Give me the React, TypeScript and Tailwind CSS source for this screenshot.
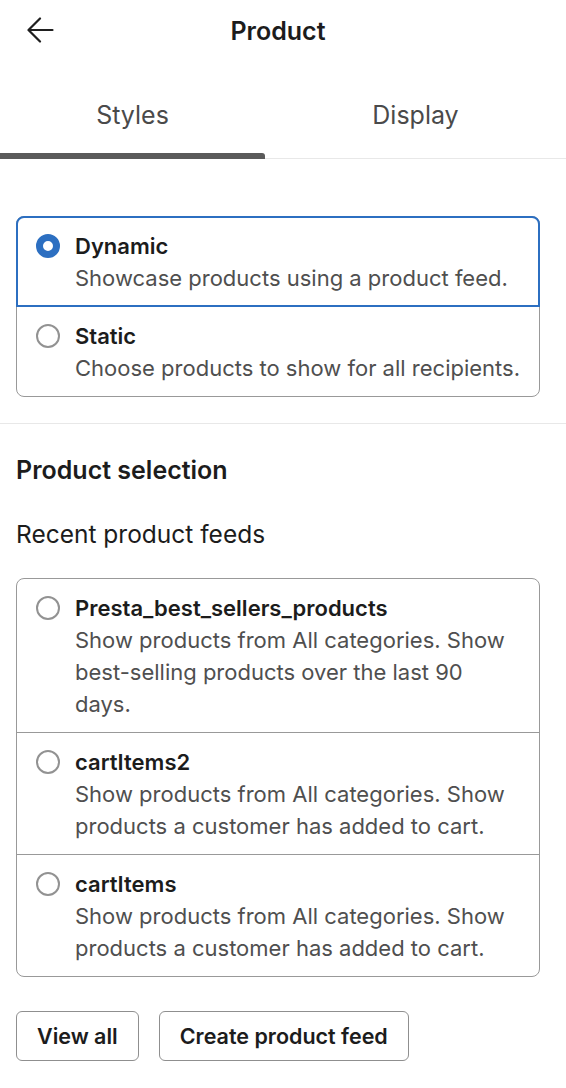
import { useState } from "react";

type Option = { id: string; title: string; desc: string };

const styleOptions: Option[] = [
  { id: "dynamic", title: "Dynamic", desc: "Showcase products using a product feed." },
  { id: "static", title: "Static", desc: "Choose products to show for all recipients." },
];

const feeds: Option[] = [
  {
    id: "presta",
    title: "Presta_best_sellers_products",
    desc: "Show products from All categories. Show best-selling products over the last 90 days.",
  },
  {
    id: "cart2",
    title: "cartItems2",
    desc: "Show products from All categories. Show products a customer has added to cart.",
  },
  {
    id: "cart",
    title: "cartItems",
    desc: "Show products from All categories. Show products a customer has added to cart.",
  },
];

function Radio({ checked }: { checked: boolean }) {
  return checked ? (
    <span className="mt-1 block size-6 shrink-0 rounded-full border-[7px] border-[#2c6fc1] bg-white" />
  ) : (
    <span className="mt-1 block size-6 shrink-0 rounded-full border-[2.5px] border-[#929292] bg-white" />
  );
}

// One bordered card holding a stack of radio rows; the picked row gets a
// blue outline drawn over the card's gray edge.
function RadioCard({
  options,
  value,
  onChange,
}: {
  options: Option[];
  value: string | null;
  onChange: (id: string) => void;
}) {
  return (
    <div className="rounded-lg border border-[#999999]">
      {options.map((o, i) => {
        const checked = o.id === value;
        const first = i === 0;
        const last = i === options.length - 1;
        return (
          <button
            key={o.id}
            type="button"
            onClick={() => onChange(o.id)}
            className={`relative flex w-full gap-[15px] pt-[13px] pr-4 pb-3 pl-[19px] text-left ${
              last ? "" : "border-b border-[#999999]"
            }`}
          >
            {checked && (
              <span
                className={`pointer-events-none absolute -inset-x-px -top-px -bottom-px border-2 border-[#2c6fc1] ${
                  first ? "rounded-t-lg" : ""
                } ${last ? "rounded-b-lg" : ""}`}
              />
            )}
            <Radio checked={checked} />
            <span className="min-w-0">
              <span className="block text-[22px] leading-8 font-semibold text-[#1c1c1c]">
                {o.title}
              </span>
              <span className="block text-[22px] leading-8 text-[#4f4f4f]">{o.desc}</span>
            </span>
          </button>
        );
      })}
    </div>
  );
}

export default function App() {
  const [tab, setTab] = useState<"styles" | "display">("styles");
  const [mode, setMode] = useState("dynamic");
  const [feed, setFeed] = useState<string | null>(null);

  return (
    <div className="min-h-screen bg-white font-['Inter','Liberation_Sans',sans-serif] text-[#1c1c1c]">
      <header className="relative flex h-[62px] items-center justify-center pt-[2px] pr-[10px]">
        <button type="button" aria-label="Back" className="absolute left-[27px] top-[17px]">
          <svg width="27" height="26" viewBox="0 0 27 26" fill="none" stroke="#1f1f1f" strokeWidth="2.2" strokeLinecap="round" strokeLinejoin="round">
            <path d="M25.5 13H2" />
            <path d="M13 1.5 1.5 13 13 24.5" />
          </svg>
        </button>
        <h1 className="text-[25px] font-semibold text-[#1c1c1c]">Product</h1>
      </header>

      <nav className="flex border-b border-[#e8e8e8]">
        {(["styles", "display"] as const).map((t) => (
          <button
            key={t}
            type="button"
            onClick={() => setTab(t)}
            className={`relative -mb-px flex h-[97px] justify-center pt-[37px] text-[25px] leading-8 text-[#4a4a4a] ${
              t === "styles" ? "w-[265px]" : "flex-1"
            }`}
          >
            {t === "styles" ? "Styles" : "Display"}
            {tab === t && (
              <span className="absolute inset-x-0 bottom-0 h-[6px] rounded-tr-[3px] bg-[#5a5a5a]" />
            )}
          </button>
        ))}
      </nav>

      <section className="border-b border-[#e8e8e8] pt-[57px] pr-[26px] pb-[26px] pl-4">
        <RadioCard options={styleOptions} value={mode} onChange={setMode} />
      </section>

      <section className="pt-[30px] pr-[26px] pb-6 pl-4">
        <h2 className="text-[25px] leading-8 font-semibold text-[#1c1c1c]">Product selection</h2>
        <p className="mt-8 text-[24.5px] leading-8 text-[#1c1c1c]">Recent product feeds</p>
        <div className="mt-[28px]">
          <RadioCard options={feeds} value={feed} onChange={setFeed} />
        </div>
        <div className="mt-[34px] flex gap-5">
          <button
            type="button"
            className="h-[50px] rounded-md border border-[#8f8f8f] px-5 text-[21.5px] font-semibold text-[#1c1c1c]"
          >
            View all
          </button>
          <button
            type="button"
            className="h-[50px] rounded-md border border-[#8f8f8f] px-5 text-[21.5px] font-semibold text-[#1c1c1c]"
          >
            Create product feed
          </button>
        </div>
      </section>
    </div>
  );
}
